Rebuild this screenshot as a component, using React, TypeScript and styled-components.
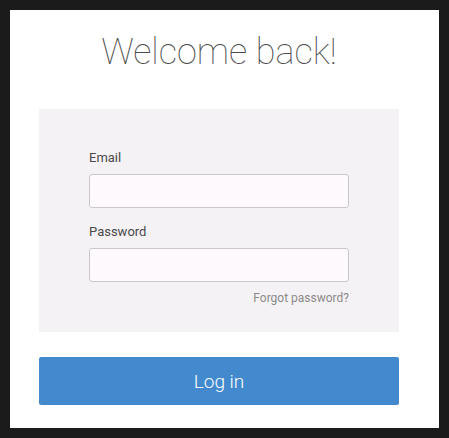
import styled, { createGlobalStyle } from "styled-components"

const GlobalStyle = createGlobalStyle`
  html, body {
    margin: 0;
    padding: 0;
    background: #1b1b1b;
  }
  body {
    font-family: Roboto, "Liberation Sans", sans-serif;
  }
`

const Frame = styled.div`
  padding: 10px;
  width: 449px;
  height: 438px;
  box-sizing: border-box;
`

const Card = styled.main`
  background: #fff;
  width: 429px;
  height: 418px;
  box-sizing: border-box;
  padding: 21px 0 0 29px;
`

const Title = styled.h1`
  margin: 0;
  width: 360px;
  text-align: center;
  font-weight: 100;
  font-size: 36px;
  line-height: 42px;
  color: #4a4a4a;
`

const FormBox = styled.form`
  margin-top: 36px;
  width: 360px;
  height: 223px;
  box-sizing: border-box;
  background: #f5f2f5;
  padding: 41px 50px 0;
  display: flex;
  flex-direction: column;
`

const Label = styled.label`
  font-size: 13px;
  line-height: 16px;
  color: #4a4a4a;
  margin-bottom: 8px;
`

const Input = styled.input<{ $last?: boolean }>`
  display: block;
  width: 260px;
  height: 34px;
  box-sizing: border-box;
  border: 1px solid #cbc8cb;
  border-radius: 3px;
  background: #fdf9fc;
  margin: 0 0 ${(p) => (p.$last ? "9px" : "16px")};
  font-family: inherit;
  font-size: 14px;
  padding: 0 10px;
`

const Forgot = styled.a`
  align-self: flex-end;
  font-size: 12px;
  line-height: 14px;
  color: #8a8a8a;
  text-decoration: none;
`

const Button = styled.button`
  margin-top: 25px;
  width: 360px;
  height: 48px;
  border: none;
  border-radius: 2px;
  background: #428acd;
  color: #fff;
  font-family: inherit;
  font-weight: 300;
  font-size: 19px;
`

export default function App() {
  return (
    <Frame>
      <GlobalStyle />
      <Card>
        <Title>Welcome back!</Title>
        <FormBox>
          <Label>Email</Label>
          <Input type="email" />
          <Label>Password</Label>
          <Input type="password" $last />
          <Forgot href="#">Forgot password?</Forgot>
        </FormBox>
        <Button>Log in</Button>
      </Card>
    </Frame>
  )
}
